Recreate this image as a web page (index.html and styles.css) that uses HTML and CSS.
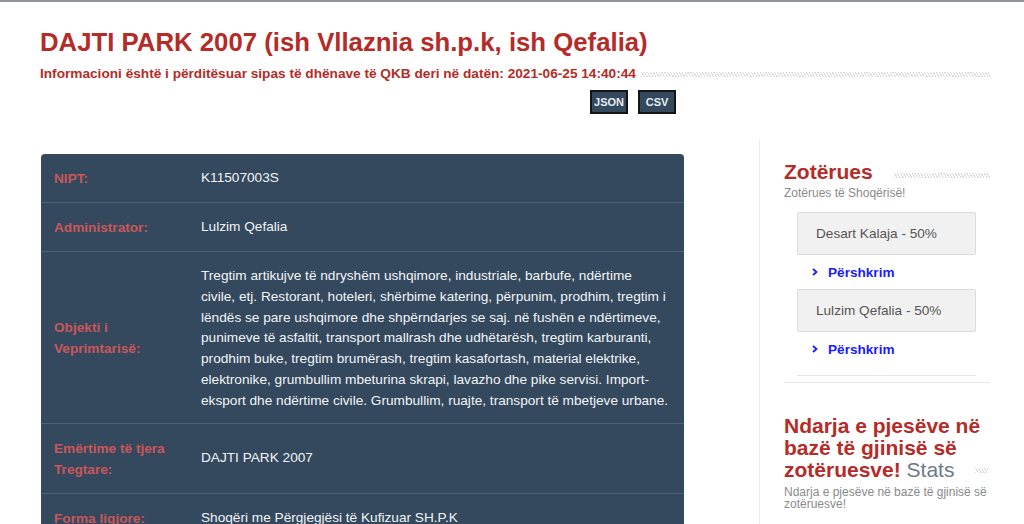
FILE: index.html
```html
<!DOCTYPE html>
<html lang="sq">
<head>
<meta charset="utf-8">
<title>DAJTI PARK 2007</title>
<link rel="stylesheet" href="styles.css">
</head>
<body>
<header class="header">
  <h1 class="title">DAJTI PARK 2007 (ish Vllaznia sh.p.k, ish Qefalia)</h1>
  <div class="subtitle-row">
    <span class="subtitle">Informacioni është i përditësuar sipas të dhënave të QKB deri në datën: 2021-06-25 14:40:44</span>
    <span class="hatch"></span>
  </div>
  <div class="buttons">
    <a class="btn">JSON</a>
    <a class="btn">CSV</a>
  </div>
</header>
<main class="main">
  <section class="left">
    <div class="card">
      <div class="row">
        <div class="label">NIPT:</div>
        <div class="value">K11507003S</div>
      </div>
      <div class="row">
        <div class="label">Administrator:</div>
        <div class="value">Lulzim Qefalia</div>
      </div>
      <div class="row">
        <div class="label">Objekti i Veprimtarisë:</div>
        <div class="value">Tregtim artikujve të ndryshëm ushqimore, industriale, barbufe, ndërtime<br>civile, etj. Restorant, hoteleri, shërbime katering, përpunim, prodhim, tregtim i lëndës se pare ushqimore dhe shpërndarjes se saj. në fushën e ndërtimeve, punimeve të asfaltit, transport mallrash dhe udhëtarësh, tregtim karburanti, prodhim buke, tregtim brumërash, tregtim kasafortash, material elektrike, elektronike, grumbullim mbeturina skrapi, lavazho dhe pike servisi. Import-eksport dhe ndërtime civile. Grumbullim, ruajte, transport të mbetjeve urbane.</div>
      </div>
      <div class="row">
        <div class="label">Emërtime të tjera Tregtare:</div>
        <div class="value">DAJTI PARK 2007</div>
      </div>
      <div class="row">
        <div class="label">Forma ligjore:</div>
        <div class="value">Shoqëri me Përgjegjësi të Kufizuar SH.P.K</div>
      </div>
    </div>
  </section>
  <aside class="side">
    <div class="side-head">
      <h2 class="side-title">Zotërues</h2>
      <span class="hatch hatch-side"></span>
    </div>
    <p class="side-sub">Zotërues të Shoqërisë!</p>
    <div class="owners">
      <div class="owner">Desart Kalaja - 50%</div>
      <a class="desc"><svg class="chev" viewBox="0 0 6 8" width="6" height="8"><polyline points="1,1 4.5,4 1,7" fill="none" stroke="#1a1aff" stroke-width="1.8"/></svg>Përshkrim</a>
      <div class="owner">Lulzim Qefalia - 50%</div>
      <a class="desc"><svg class="chev" viewBox="0 0 6 8" width="6" height="8"><polyline points="1,1 4.5,4 1,7" fill="none" stroke="#1a1aff" stroke-width="1.8"/></svg>Përshkrim</a>
    </div>
    <div class="side-sep"></div>
    <div class="stats-head">
      <h2 class="stats-title">Ndarja e pjesëve në bazë të gjinisë së zotëruesve! <span class="stats-word">Stats</span></h2>
      <span class="hatch hatch-mini"></span>
    </div>
    <p class="side-sub stats-sub">Ndarja e pjesëve në bazë të gjinisë së zotëruesve!</p>
  </aside>
</main>
</body>
</html>
```
FILE: styles.css
```css
* { box-sizing: border-box; }
html, body { margin: 0; padding: 0; }
body {
  font-family: "Liberation Sans", Arial, sans-serif;
  background: #fff;
  border-top: 2px solid #8e939c;
  color: #333;
}
.header {
  padding: 0 34px 0 40px;
}
.title {
  margin: 25px 0 0;
  font-size: 25.75px;
  line-height: 30px;
  font-weight: bold;
  color: #b52b27;
}
.subtitle-row {
  display: flex;
  align-items: center;
  margin-top: 9px;
}
.subtitle {
  font-size: 13.65px;
  font-weight: bold;
  color: #b52b27;
  line-height: 16px;
  white-space: nowrap;
}
.hatch {
  flex: 1;
  height: 5px;
  margin-left: 5px;
  background: repeating-linear-gradient(60deg, #dadada 0 1px, transparent 1px 2.5px);
}
.buttons {
  display: flex;
  justify-content: flex-end;
  gap: 10px;
  width: 636px;
  margin-top: 8px;
}
.btn {
  display: inline-flex;
  align-items: center;
  justify-content: center;
  height: 24px;
  padding: 0 2px;
  min-width: 38px;
  background: #34495e;
  border: 2px solid #151515;
  color: #e6edf3;
  font-size: 11px;
  font-weight: bold;
}
.main {
  display: flex;
  margin-top: 25px;
}
.left {
  width: 684px;
  padding: 15px 0 0 41px;
  margin-right: 75px;
}
.card {
  background: #34495e;
  border-radius: 4px 4px 0 0;
}
.row {
  display: flex;
  border-bottom: 1px solid #4a6279;
}
.label {
  width: 147px;
  flex: none;
  padding: 14px 12px 13px 13px;
  font-size: 13.65px;
  line-height: 21px;
  font-weight: bold;
  color: #c9575a;
}
.row:nth-child(3) .label { display: flex; align-items: center; }
.row:nth-child(3) .label, .row:nth-child(4) .label { padding-right: 18px; }
.row:nth-child(4) .value { display: flex; align-items: center; }
.row:nth-child(3) .value { padding-bottom: 11px; }
.value {
  flex: 1;
  padding: 14px 13px 13px 13px;
  font-size: 13.65px;
  line-height: 20.8px;
  color: #f2f4f6;
}
.side {
  width: 231px;
  border-left: 1px solid #ececec;
  padding: 20px 0 0 24px;
}
.side-head {
  display: flex;
  align-items: center;
}
.side-title {
  margin: 0;
  font-size: 21px;
  line-height: 26px;
  font-weight: bold;
  color: #b52b27;
}
.hatch-side {
  margin-left: 21px;
  margin-top: 6px;
}
.side-sub {
  margin: 2px 0 0;
  font-size: 12px;
  line-height: 12px;
  color: #8a8a8a;
}
.owners {
  margin: 13px 14px 0 13px;
  padding-bottom: 9px;
  border-bottom: 1px solid #e4e4e4;
}
.owner {
  height: 43px;
  display: flex;
  align-items: center;
  padding-left: 18px;
  background: #f1f1f1;
  border: 1px solid #dcdcdc;
  border-radius: 2px;
  font-size: 13.6px;
  color: #555;
}
.desc {
  display: flex;
  align-items: center;
  height: 34px;
  padding-left: 15px;
  font-size: 13.6px;
  font-weight: bold;
  color: #1a1aff;
}
.chev { margin-right: 10px; }
.side-sep {
  margin-top: 6px;
  border-top: 1px solid #e8e8e8;
}
.stats-head {
  display: flex;
  align-items: flex-end;
  margin-top: 32px;
}
.stats-title {
  margin: 0;
  font-size: 21px;
  line-height: 22px;
  font-weight: bold;
  color: #b52b27;
  width: 199px;
  flex: none;
}
.stats-word {
  font-weight: normal;
  color: #6b7a88;
}
.hatch-mini {
  flex: none;
  width: 13px;
  margin: 0 0 8px -8px;
}
.stats-sub {
  margin-top: 5px;
}
```
